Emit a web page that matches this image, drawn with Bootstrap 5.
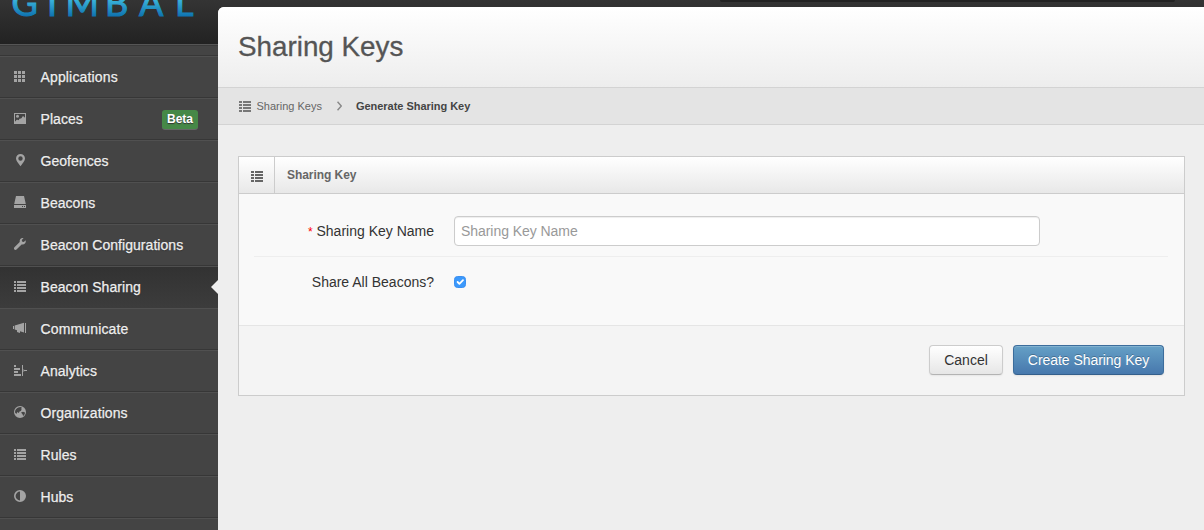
<!DOCTYPE html>
<html lang="en">
<head>
<meta charset="utf-8">
<meta name="viewport" content="width=device-width, initial-scale=1">
<title>Generate Sharing Key</title>
<link href="https://cdn.jsdelivr.net/npm/bootstrap@5.3.0/dist/css/bootstrap.min.css" rel="stylesheet">
<style>
body{font-family:"Liberation Sans",Arial,sans-serif;font-size:14px;line-height:20px;color:#333;background:#444;height:530px;overflow:hidden}
.topbar{height:44px;background:linear-gradient(#343434,#222)}
.search-edge{left:720px;width:455px;height:2px;background:#222;border-radius:0 0 4px 4px}
.shell{height:530px;overflow:hidden}
.sidebar{width:218px;flex:none}
.brand-area{height:44px}
.brand-area svg{display:block}
.brand-gap{height:12px;border-top:1px solid #555;border-bottom:1px solid #373737;box-shadow:inset 0 1px #3a3a3a}
.menu a{height:42px;border-top:1px solid #505050;border-bottom:1px solid #373737;color:#eee;text-decoration:none;padding:0 20px 0 13px;text-shadow:0 1px 1px #333}
.menu svg{width:14px;height:14px;fill:#a4a4a4;margin-right:13.5px;flex:none;overflow:visible}
.menu span.label-text{-webkit-text-stroke:.25px #eee;letter-spacing:.05px}
.menu a.current{background:linear-gradient(#323232,#3c3c3c);border-bottom-color:#3c3c3c}
.menu a.current::after{content:"";position:absolute;right:0;top:13px;border:7px solid transparent;border-right-color:#eee;border-left:0}
.menu .menu-tail{height:12px;border-top:1px solid #505050}
.menu span.spaced{letter-spacing:.15px}
.beta{background:#468847;width:36px;height:19px;border-radius:3px;font-size:12px;font-weight:bold;color:#fff;line-height:18px;box-shadow:0 1px #666}
.main{margin-top:7px;background:#eee;border-radius:6px 0 0 0}
.title-area{height:80px;background:linear-gradient(#fff,#ededed);border-radius:6px 0 0 0;padding:22px 20px 0}
.title-area h1{font-size:27.8px;line-height:36px;color:#555;font-weight:400;-webkit-text-stroke:.3px #555}
.crumbs{height:38px;border:solid #d3d3d3;border-width:1px 0;background:#e4e4e4;padding-left:21px;font-size:11px;color:#666}
.crumbs b{color:#444;letter-spacing:-.03px}
.crumb-link{margin-left:5.5px}
.crumb-sep{margin:0 14px 0 15px}
.panel{margin:31px 19px 0 20px;height:240px;border:1px solid #ccc;background:#f9f9f9}
.panel-top{height:37px;background:linear-gradient(#fff,#e8e8e8);border-bottom:1px solid #ccc}
.panel-icon{width:36px;border-right:1px solid #ccc;padding-top:3px}
.panel-top h5{font-size:12px;font-weight:bold;color:#666;padding-left:12px;letter-spacing:-.06px}
.panel-body{height:131px;padding:22px 16px 0 15px}
.field-row{height:41px;border-bottom:1px solid #eee}
.check-row{padding-top:15px}
.lbl{width:180px;text-align:right;margin-right:20px}
.field-row .lbl{padding-top:5px}
.lbl i{font-style:normal;color:red;font-size:12px}
.form-control{width:586px;height:30px;border-color:#ccc;border-radius:4px;padding:0 6px;font-size:14px;letter-spacing:-.05px;box-shadow:inset 0 1px 1px rgba(0,0,0,.07)}
.form-control::placeholder{color:#999}
.form-check-input{width:12px;height:12px;border-radius:3px;margin:0}
.form-check-input:checked{background-color:#3b99fc;border-color:#3b8ff0;background-size:12px}
.panel-foot{height:70px;border-top:1px solid #e5e5e5;background:#f4f4f4;padding:19px 20px 0;gap:10px}
.btn{height:30px;font-size:14px;line-height:20px;padding:4px 0;border-radius:4px}
.btn-plain{width:74px;color:#333;background:linear-gradient(#fff,#e6e6e6);border:1px solid #ccc;border-bottom-color:#b3b3b3;box-shadow:0 1px 2px rgba(0,0,0,.06)}
.btn-make{width:151px;color:#fff;background:linear-gradient(#65a0c6,#4778ad);border:1px solid #3c6d9c;border-bottom-color:#345f8b;text-shadow:0 -1px rgba(0,0,0,.25);box-shadow:inset 0 1px rgba(255,255,255,.2),0 1px 2px rgba(0,0,0,.08);white-space:nowrap;letter-spacing:-.05px}
.fit{display:inline-block;white-space:nowrap}
</style>
</head>
<body>
<svg width="0" height="0" class="position-absolute">
<symbol id="i-grid" viewBox="0 0 14 14"><path d="M1 1h3v3H1zM5 1h3v3H5zM9 1h3v3H9zM1 5h3v3H1zM5 5h3v3H5zM9 5h3v3H9zM1 9h3v3H1zM5 9h3v3H5zM9 9h3v3H9z"/></symbol>
<symbol id="i-list" viewBox="0 0 14 14"><path d="M1 1h2v2H1zM4 1h9v2H4zM1 4h2v2H1zM4 4h9v2H4zM1 7h2v2H1zM4 7h9v2H4zM1 10h2v2H1zM4 10h9v2H4z"/></symbol>
<symbol id="i-thlist" viewBox="0 0 12 11"><path d="M0 0h3v2H0zM4 0h8v2H4zM0 3h3v2H0zM4 3h8v2H4zM0 6h3v2H0zM4 6h8v2H4zM0 9h3v2H0zM4 9h8v2H4z"/></symbol>
</svg>
<div class="topbar position-absolute top-0 start-0 w-100"><div class="search-edge position-absolute top-0"></div></div>
<div class="shell d-flex position-relative">
<aside class="sidebar">
<div class="brand-area">
<svg width="218" height="44" role="img" aria-label="Gimbal"><defs><linearGradient id="blue" gradientUnits="userSpaceOnUse" x1="0" y1="-6" x2="0" y2="17"><stop offset="0" stop-color="#49cbe9"/><stop offset="1" stop-color="#0d70ae"/></linearGradient></defs>
<text x="11.5 47 65.5 105 139 175" y="16" font-family="Lato, sans-serif" font-size="36" fill="url(#blue)" stroke="url(#blue)" stroke-width="1">GIMBAL</text></svg>
</div>
<div class="brand-gap"></div>
<nav class="menu">
<a href="#" class="d-flex align-items-center"><svg><use href="#i-grid"/></svg><span class="label-text spaced">Applications</span></a>
<a href="#" class="d-flex align-items-center"><svg viewBox="0 0 14 14"><path fill-rule="evenodd" d="M1 1h12v11H1zM2 2v8l2-2 1.500.5 1.500-2 1 .5 2-2.500 2 1.500V2z"/><circle cx="4.500" cy="4.300" r="1.500"/><path d="M2 10l2-2.500 1.500 1L7 6.500l1 .5 2-3 2 2v5H2z"/></svg><span class="label-text">Places</span><span class="beta ms-auto text-center">Beta</span></a>
<a href="#" class="d-flex align-items-center"><svg viewBox="0 0 14 14"><path fill-rule="evenodd" d="M7.500 0A4.500 4.500 0 0 0 3 4.500C3 7 5.200 9 7.500 12.300 9.800 9 12 7 12 4.500A4.500 4.500 0 0 0 7.500 0zM7.500 2.300a2.200 2.200 0 1 1 0 4.400 2.200 2.200 0 0 1 0-4.400z"/></svg><span class="label-text">Geofences</span></a>
<a href="#" class="d-flex align-items-center"><svg viewBox="0 0 14 14"><path fill-rule="evenodd" d="M3 0h8l1.800 8H1.200zM1 9h12v3H1zM9 10v1h1v-1zM11 10v1h1v-1z"/></svg><span class="label-text">Beacons</span></a>
<a href="#" class="d-flex align-items-center"><svg viewBox="0 0 14 14"><path d="M12.700 2.200 10.800 4 9 3.600 8.800 1.900 10.500.2C8.300-.3 6.300 1.200 6.700 4L1.200 9.400c-1 1.500.9 3.200 2.300 2.200L8.600 6.400c2.700.6 4.700-1.500 4.100-4.200z"/></svg><span class="label-text">Beacon Configurations</span></a>
<a href="#" class="d-flex align-items-center current position-relative"><svg><use href="#i-list"/></svg><span class="label-text">Beacon Sharing</span></a>
<a href="#" class="d-flex align-items-center"><svg viewBox="0 0 14 14"><path d="M0 4h1v3H0zM1.700 3.500 11 .8v9.700L7 9.300V11L4 10V8.200L1.700 7.500zM12 1h1v10h-1z"/></svg><span class="label-text spaced">Communicate</span></a>
<a href="#" class="d-flex align-items-center"><svg viewBox="0 0 14 14"><path d="M1 1h2v2H1zM1 4h6v2H1zM1 7h4v2H1zM1 10h7v2H1zM9 1h1v11H9zM11 6h3v1h-3zM10.500 5l1.500 1.500L10.500 8z"/></svg><span class="label-text">Analytics</span></a>
<a href="#" class="d-flex align-items-center"><svg viewBox="0 0 14 14"><path fill-rule="evenodd" d="M7 0a6 6 0 1 0 0 12A6 6 0 0 0 7 0zM6 1.200l2-.1 1 1-1.200.8 1 .6L7.800 5 6.500 5.500 5.800 7 4.200 6 3.500 8 2 6.500C1.800 4 3.500 1.800 6 1.200zM8 6.500l2-.8 2 .8c0 1.500-.7 2.700-1.800 3.600L9.500 8.300z"/></svg><span class="label-text">Organizations</span></a>
<a href="#" class="d-flex align-items-center"><svg><use href="#i-list"/></svg><span class="label-text">Rules</span></a>
<a href="#" class="d-flex align-items-center"><svg viewBox="0 0 14 14"><path fill-rule="evenodd" d="M7 0a6 6 0 1 0 0 12A6 6 0 0 0 7 0zM7 1.600v8.800a4.400 4.400 0 0 1 0-8.800z"/></svg><span class="label-text">Hubs</span></a>
<div class="menu-tail"></div>
</nav>
</aside>
<main class="main flex-grow-1">
<header class="title-area"><h1 class="m-0">Sharing Keys</h1></header>
<div class="crumbs d-flex align-items-center"><svg width="12" height="11" fill="#777" shape-rendering="crispEdges"><use href="#i-thlist"/></svg><span class="fit crumb-link">Sharing Keys</span><svg class="crumb-sep" width="5" height="10" fill="none" stroke="#888" stroke-width="1.500"><path d="M.5 .8 4.300 5 .5 9.200"/></svg><b class="fit">Generate Sharing Key</b></div>
<section class="panel">
<div class="panel-top d-flex align-items-center"><div class="panel-icon h-100 d-flex align-items-center justify-content-center"><svg width="12" height="11" fill="#666" shape-rendering="crispEdges"><use href="#i-thlist"/></svg></div><h5 class="m-0">Sharing Key</h5></div>
<form>
<div class="panel-body">
<div class="field-row d-flex"><label class="lbl" for="keyname"><i>*</i> Sharing Key Name</label><input id="keyname" class="form-control" placeholder="Sharing Key Name"></div>
<div class="check-row d-flex"><label class="lbl" for="all-beacons">Share All Beacons?</label><input id="all-beacons" class="form-check-input mt-1" type="checkbox" checked></div>
</div>
<div class="panel-foot d-flex justify-content-end"><button type="button" class="btn btn-plain">Cancel</button><button type="button" class="btn btn-make">Create Sharing Key</button></div>
</form>
</section>
</main>
</div>
<script src="https://cdn.jsdelivr.net/npm/bootstrap@5.3.0/dist/js/bootstrap.bundle.min.js"></script>
</body>
</html>
